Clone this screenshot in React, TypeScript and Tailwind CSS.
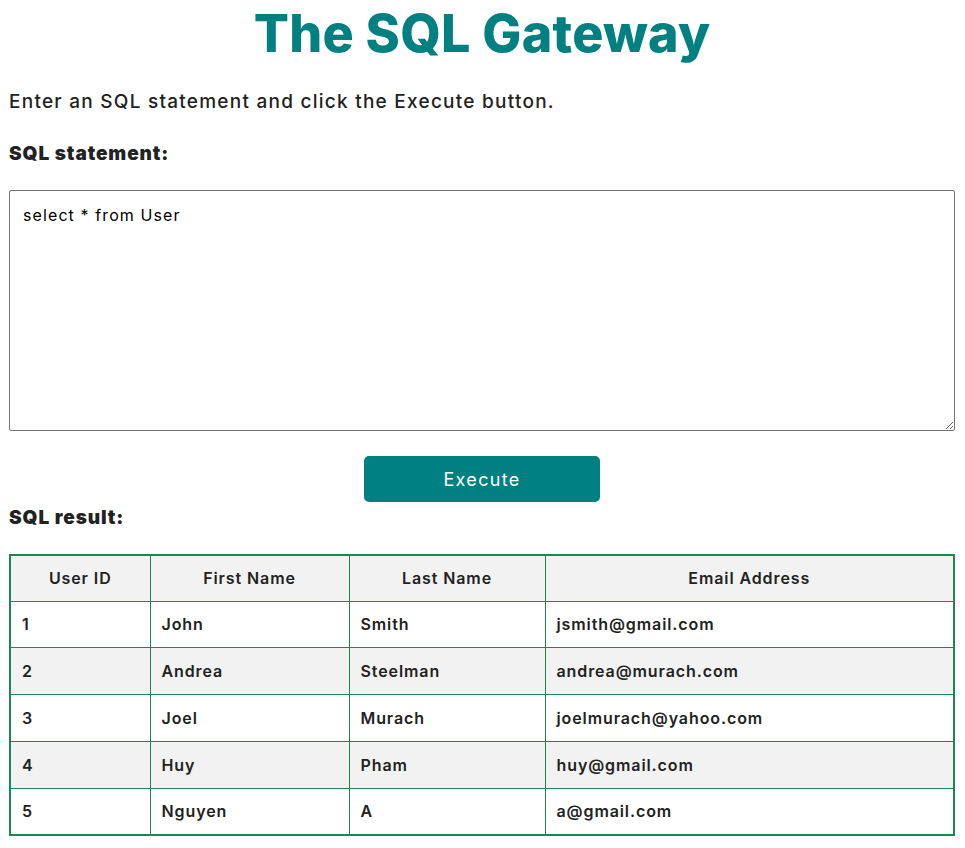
const rows = [
  { id: '1', first: 'John', last: 'Smith', email: 'jsmith@gmail.com' },
  { id: '2', first: 'Andrea', last: 'Steelman', email: 'andrea@murach.com' },
  { id: '3', first: 'Joel', last: 'Murach', email: 'joelmurach@yahoo.com' },
  { id: '4', first: 'Huy', last: 'Pham', email: 'huy@gmail.com' },
  { id: '5', first: 'Nguyen', last: 'A', email: 'a@gmail.com' },
];

export default function App() {
  return (
    <div className="min-h-[848px] bg-white pl-[9px] pr-[10px] font-['Inter',_sans-serif] text-[#222222]">
      {/* title */}
      <h1 className="pt-[2px] text-center text-[52px] font-extrabold leading-[64px] tracking-[0.005em] text-[#008080]">
        The SQL Gateway
      </h1>

      <p className="mt-[22px] text-[19px] font-medium leading-[28px] tracking-[1.25px]">
        Enter an SQL statement and click the Execute button.
      </p>

      <h3 className="mt-[24px] text-[19px] font-black leading-[28px] tracking-[0.9px]">SQL statement:</h3>

      {/* sql input */}
      <textarea
        defaultValue="select * from User"
        className="mt-[22px] block h-[241px] w-full resize-y rounded-[2px] border border-[#767676] px-[13px] py-[13px] text-[16px] leading-[22px] tracking-[1.1px] text-black outline-none"
      />

      <div className="mt-[25px] flex justify-center">
        <button className="h-[46px] w-[236px] rounded-[5px] bg-[#008080] text-[18px] font-normal tracking-[1.3px] text-white">
          Execute
        </button>
      </div>

      <h3 className="mt-[2px] text-[19px] font-black leading-[28px] tracking-[0.9px]">SQL result:</h3>

      {/* result table */}
      <table className="mt-[22px] w-full border-collapse border-2 border-[#1e8654] text-[16px] tracking-[0.9px]">
        <thead>
          <tr className="h-[46px] bg-[#f2f2f2]">
            <th className="w-[140px] border border-[#1e8654] font-semibold">User ID</th>
            <th className="w-[199px] border border-[#1e8654] font-semibold">First Name</th>
            <th className="w-[196px] border border-[#1e8654] font-semibold">Last Name</th>
            <th className="border border-[#1e8654] font-semibold">Email Address</th>
          </tr>
        </thead>
        <tbody>
          {rows.map((r, i) => (
            <tr key={r.id} className={i % 2 === 1 ? 'h-[46.8px] bg-[#f2f2f2]' : 'h-[46.8px] bg-white'}>
              <td className="border border-[#1e8654] px-[11px] font-semibold">{r.id}</td>
              <td className="border border-[#1e8654] px-[11px] font-semibold">{r.first}</td>
              <td className="border border-[#1e8654] px-[11px] font-semibold">{r.last}</td>
              <td className="border border-[#1e8654] px-[11px] font-semibold">{r.email}</td>
            </tr>
          ))}
        </tbody>
      </table>
    </div>
  );
}
